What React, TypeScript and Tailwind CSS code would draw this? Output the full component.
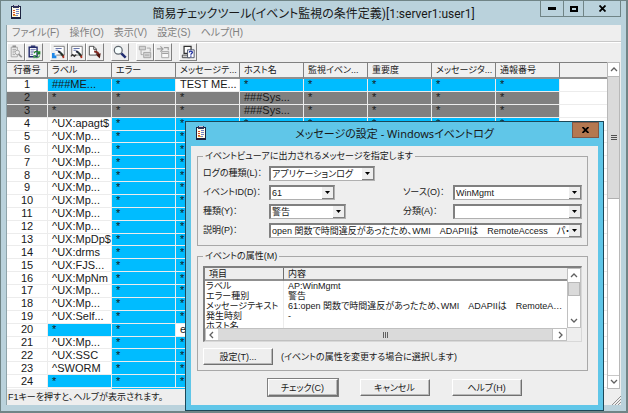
import type { ReactNode } from 'react';
import clsx from 'clsx';

const STAR = '*';

interface Row {
  label: string;
  message?: string;
  host?: string;
  disabled?: boolean;
}

const rows: Row[] = [
  { label: '###ME...', message: 'TEST ME...' },
  { label: STAR, host: '###Sys...', disabled: true },
  { label: STAR, host: '###Sys...', disabled: true },
  { label: '^UX:apagt$' },
  { label: '^UX:Mp...' },
  { label: '^UX:Mp...' },
  { label: '^UX:Mp...' },
  { label: '^UX:Mp...' },
  { label: '^UX:Mp...' },
  { label: '^UX:Mp...' },
  { label: '^UX:Mp...' },
  { label: '^UX:Mp...' },
  { label: '^UX:MpDp$' },
  { label: '^UX:drms' },
  { label: '^UX:FJS...' },
  { label: '^UX:MpNm' },
  { label: '^UX:Mp...' },
  { label: '^UX:Mp...' },
  { label: '^UX:Self...' },
  { label: STAR, message: 'e...' },
  { label: '^UX:Mp...' },
  { label: '^UX:SSC' },
  { label: '^SWORM' },
  { label: STAR },
];

const columns = ['ラベル', 'エラー', 'メッセージテ...', 'ホスト名', '監視イベン...', '重要度', 'メッセージタ...', '通報番号'];

const menus = ['ファイル(F)', '操作(O)', '表示(V)', '設定(S)', 'ヘルプ(H)'];

const attributes = [
  ['ラベル', 'AP:WinMgmt'],
  ['エラー種別', '警告'],
  ['メッセージテキスト', '61:open 関数で時間違反があったため、WMI\u2003ADAPIIは\u2003RemoteAccess パ'],
  ['発生時刻', '-'],
  ['ホスト名', ''],
];

function ClipboardIcon() {
  return (
    <svg className="block h-3.5 w-3" viewBox="0 0 12 14" shapeRendering="crispEdges" aria-hidden="true">
      <rect x="1" y="1" width="10" height="13" fill="#1c2340" />
      <rect x="2" y="2" width="8" height="10" fill="#fffbe8" />
      <rect x="3" y="0" width="6" height="3" fill="#30345c" />
      <rect x="4" y="0" width="4" height="1" fill="#c9c9d8" />
      <path d="M3 5h2M3 7h2M3 9h2" stroke="#d8502a" transform="translate(0 .5)" />
      <path d="M6 4h3M6 6h3M6 8h3M6 10h2" stroke="#6f7fc8" transform="translate(0 .5)" />
      <rect x="3" y="10" width="3" height="1" fill="#e0a030" />
    </svg>
  );
}

function Arrow({ dir }: { dir: 'up' | 'down' | 'left' | 'right' }) {
  const paths = { up: 'M1 5l3-3 3 3', down: 'M1 2l3 3 3-3', left: 'M5 1L2 4l3 3', right: 'M3 1l3 3-3 3' };
  return (
    <svg className="size-2" viewBox="0 0 8 8" fill="none" stroke="#606060" strokeWidth="1.3" aria-hidden="true">
      <path d={paths[dir]} />
    </svg>
  );
}

function ToolButton({ label, disabled, children }: { label: string; disabled?: boolean; children: ReactNode }) {
  return (
    <button
      type="button"
      aria-label={label}
      disabled={disabled}
      className="flex h-[18px] w-[18px] items-center justify-center border border-t-white border-r-[#808080] border-b-[#808080] border-l-white bg-[#eeeeee]"
    >
      <svg className="size-3.5" viewBox="0 0 16 16" fill="none" aria-hidden="true">
        {children}
      </svg>
    </button>
  );
}

// brush shared by the "definition" buttons
function Brush() {
  return (
    <>
      <path d="M7 7l3 2" stroke="#20283a" strokeWidth="2.4" />
      <path d="M10 9l3 4" stroke="#203028" strokeWidth="2.6" />
      <path d="M13 12v3" stroke="#b03020" strokeWidth="2" />
    </>
  );
}

function Toolbar() {
  return (
    <div role="toolbar" className="flex h-5 border-t border-white">
      <ToolButton label="検索" disabled>
        <path d="M2.5 2.5h7v11h-7zM4 5h4M4 7h3M4 9h2M4 11h3" stroke="#a0a0a0" />
        <path d="M4 1.5h4" stroke="#909090" strokeWidth="2" />
        <circle cx="9.500" cy="8.500" r="2.500" fill="#eee" stroke="#a0a0a0" />
        <path d="M11 10.500l3.500 3.500" stroke="#909090" strokeWidth="2" />
      </ToolButton>
      <ToolButton label="更新">
        <path d="M2.5 2.5h9v11h-9z" fill="#fff" stroke="#20286a" strokeWidth="1.6" />
        <path d="M4.500 1.500h5" stroke="#303870" strokeWidth="2" />
        <path d="M4 5h6M4 7h4M4 9h3M4 11h3" stroke="#6068a8" />
        <path d="M8 9.500c1-3 5-3 6 0M14.500 7v3h-3" stroke="#208030" strokeWidth="1.5" />
        <path d="M14.500 12c-1 3-5 3-6 1M8 15v-3h3" stroke="#50a060" strokeWidth="1.4" />
      </ToolButton>
      <div className="w-[7px]" />
      <ToolButton label="追加">
        <path d="M2 1.500h12v10H5" fill="#fff" stroke="#707070" />
        <path d="M4 4h7M4 6h3" stroke="#5060a0" />
        <path d="M0 9v6h5v-3H3V9z" fill="#2088e8" />
        <Brush />
      </ToolButton>
      <ToolButton label="編集">
        <path d="M2 1.500h12v10H2z" fill="#fff" stroke="#707070" />
        <path d="M4 4h7M4 6h3" stroke="#5060a0" />
        <path d="M1 13l2-2 2 2 2-2" stroke="#303030" strokeWidth="1.6" />
        <Brush />
      </ToolButton>
      <ToolButton label="削除">
        <path d="M1.500 1.500h5l3 3v7h-8z" fill="#fff" stroke="#404040" />
        <path d="M6.500 1.500V5h3" stroke="#404040" />
        <path d="M7 7.500c4 0 5 2 5 5" stroke="#802820" strokeWidth="2.400" />
        <path d="M9 11l4.500 4.500 1-6z" fill="#501810" />
      </ToolButton>
      <div className="w-[7px]" />
      <ToolButton label="参照">
        <circle cx="6" cy="6" r="4.500" fill="#f8ffff" stroke="#606870" strokeWidth="1.400" />
        <path d="M9.500 9.500l5 5" stroke="#202c70" strokeWidth="2.800" />
      </ToolButton>
      <div className="w-[7px]" />
      <ToolButton label="上へ移動" disabled>
        <path d="M1.500 1.500h7v4h-7zM6.500 8.500h8v6h-8z" fill="#d4d4d4" stroke="#a0a0a0" />
        <path d="M10 3.500h4v4M3.500 6v5h2M8 11.500h5" stroke="#a0a0a0" />
      </ToolButton>
      <ToolButton label="下へ移動" disabled>
        <path d="M6.500 7.500h8v7h-8z" fill="#f8f8f8" stroke="#a0a0a0" />
        <path d="M1 4.500h6M5 1.500l3 3-3 3M9 3h5v3M7 9.500h7" stroke="#a0a0a0" strokeWidth="1.300" />
      </ToolButton>
      <div className="w-[7px]" />
      <ToolButton label="ヘルプ">
        <path d="M3.500 1.500h8v8h-8z" fill="#fff" stroke="#303030" strokeWidth="1.400" />
        <path d="M1.500 11.500h9v3h-9z" fill="#d0d0d0" stroke="#404040" />
        <path d="M7.500 5.500h7.500v9H7.500z" fill="#fff" stroke="#404860" />
        <path d="M9.500 8.500c0-2 3.500-2 3.500 0 0 1-1.700 1-1.700 2.500M11.300 12v1.500" stroke="#1c2ca0" strokeWidth="1.500" />
      </ToolButton>
    </div>
  );
}

function ConditionTable() {
  return (
    <table className="h-[328px] w-full table-fixed border-separate border-spacing-0 bg-white text-[11px] leading-[11px]">
      <colgroup>
        <col className="w-[41px]" />
        {columns.map((c) => (
          <col key={c} className="w-16" />
        ))}
        <col />
      </colgroup>
      <thead className="text-[9px]">
        <tr className="h-[17px]">
          {['行番号', ...columns, ''].map((c, i) => (
            <th
              key={i}
              className={clsx(
                'h-[17px] border-t border-b-2 border-t-[#808080] border-b-[#909090] bg-[#f0f0f0] p-0 font-normal whitespace-nowrap',
                i === 0 ? 'text-center' : 'pl-1 text-left',
                i < 9 && 'border-r border-r-[#808080]',
              )}
            >
              {c}
            </th>
          ))}
        </tr>
      </thead>
      <tbody>
        {rows.map((row, i) => {
          const cells = [row.label, STAR, row.message ?? STAR, row.host ?? STAR, STAR, STAR, STAR, STAR];
          return (
            <tr key={i}>
              <td
                className={clsx(
                  'border-r border-b border-[#ececec] p-0 text-center',
                  row.disabled && 'bg-[#808080]',
                )}
              >
                {i + 1}
              </td>
              {cells.map((text, c) => (
                <td
                  key={c}
                  className={clsx(
                    'border-r border-b border-[#ececec] p-0 pl-1 whitespace-nowrap',
                    row.disabled && 'bg-[#808080]',
                    !row.disabled && (text === STAR || text.startsWith('#')) && 'bg-[#00bcff]',
                  )}
                >
                  {text}
                </td>
              ))}
              <td className="border-b border-[#ececec] p-0" />
            </tr>
          );
        })}
        <tr>
          <td className="h-[2px] border-r border-[#ececec] p-0" />
          <td className="h-[2px] border-r border-[#ececec] p-0" />
          <td colSpan={7} className="h-[2px] bg-[#00bcff] p-0" />
          <td className="h-[2px] p-0" />
        </tr>
      </tbody>
    </table>
  );
}

function GroupBox({ title, className, children }: { title: string; className?: string; children: ReactNode }) {
  return (
    <fieldset className={clsx('min-w-0 border border-[#a8a8a8] px-[5px]', className)}>
      <legend className="px-0.5 leading-[14px]">{title}</legend>
      {children}
    </fieldset>
  );
}

function Combo({ id, value, className }: { id: string; value: string; className?: string }) {
  return (
    <div className={clsx('grid h-[15px] border border-t-2 border-l-2 border-[#b0b0b0] border-t-[#808080] border-l-[#808080] bg-white', className)}>
      <select id={id} defaultValue={value} className="col-start-1 row-start-1 min-w-0 appearance-none bg-white pr-3 pl-px leading-3 outline-none">
        <option>{value}</option>
      </select>
      <span className="pointer-events-none col-start-1 row-start-1 flex w-3 items-center justify-center justify-self-end border-r border-b border-[#808080] bg-[#eeeeee]">
        <svg className="h-[3px] w-[5px]" viewBox="0 0 5 3" aria-hidden="true">
          <path d="M0 0h5L2.500 3z" fill="#000" />
        </svg>
      </span>
    </div>
  );
}

function PushButton({ className, children }: { className?: string; children: ReactNode }) {
  return (
    <button
      type="button"
      className={clsx(
        'h-[17px] w-[70px] border border-t-white border-r-[#707070] border-b-[#707070] border-l-white bg-[#eeeeee] leading-3 shadow-[inset_-1px_-1px_0_#b8b8b8]',
        className,
      )}
    >
      {children}
    </button>
  );
}

function AttributeList() {
  return (
    <div className="flex h-[76px] border border-t-2 border-l-2 border-[#d8d8d8] border-t-[#808080] border-l-[#808080] bg-[#eeeeee]">
      <div className="flex min-w-0 flex-1 flex-col">
        <div className="min-h-0 flex-1 overflow-hidden bg-white">
          <table className="w-full table-fixed border-separate border-spacing-0 leading-[10px]">
            <colgroup>
              <col className="w-[79px]" />
              <col />
            </colgroup>
            <thead>
              <tr>
                <th className="h-[13px] border-r border-b-2 border-r-[#707070] border-b-[#909090] bg-[#eeeeee] p-0 pl-1 text-left font-normal">項目</th>
                <th className="h-[13px] border-b-2 border-b-[#909090] bg-[#eeeeee] p-0 pl-1 text-left font-normal">内容</th>
              </tr>
            </thead>
            <tbody>
              {attributes.map(([name, value]) => (
                <tr key={name}>
                  <td className="h-[10px] border-r border-[#ececec] p-0 pl-px whitespace-nowrap">{name}</td>
                  <td className="h-[10px] truncate p-0 pr-1 pl-1">{value}</td>
                </tr>
              ))}
            </tbody>
          </table>
        </div>
        <div className="flex h-[13px] border border-[#c0c0c0] bg-[#dadada]">
          <span className="flex w-3 items-center justify-center bg-white">
            <Arrow dir="left" />
          </span>
          <span className="flex flex-1 items-center justify-center gap-px">
            <i className="h-1.5 w-px bg-[#606060]" />
            <i className="h-1.5 w-px bg-[#606060]" />
            <i className="h-1.5 w-px bg-[#606060]" />
          </span>
          <span className="flex w-3.5 items-center justify-center border-l border-[#c0c0c0] bg-white">
            <Arrow dir="right" />
          </span>
        </div>
      </div>
      <div className="mb-[13px] flex w-3.5 flex-col border border-[#c0c0c0] bg-white">
        <span className="flex h-[13px] items-center justify-center">
          <Arrow dir="up" />
        </span>
        <span className="h-3.5 border border-[#b8b8b8] bg-[#dadada]" />
        <span className="flex-1" />
        <span className="flex h-[13px] items-center justify-center">
          <Arrow dir="down" />
        </span>
      </div>
    </div>
  );
}

function MessageDialog() {
  return (
    <section
      role="dialog"
      aria-labelledby="dialog-title"
      className="absolute top-[120px] right-[22px] left-[184px] border border-[#1c4858] bg-[#60c6e8] px-[5px] pb-[5px]"
    >
      <header className="relative flex h-6 items-center justify-center">
        <span className="absolute top-1 left-1">
          <ClipboardIcon />
        </span>
        <h2 id="dialog-title" className="font-['Noto_Sans','Noto_Sans_CJK_JP',sans-serif] text-[11px] leading-4">
          メッセージの設定 - Windowsイベントログ
        </h2>
        <button type="button" aria-label="閉じる" className="absolute top-0 -right-px flex h-4 w-[27px] items-center justify-center border border-[#805848] bg-[#b47850]">
          <svg className="h-1.5 w-[7px]" viewBox="0 0 7 6" stroke="#000" strokeWidth="1.800" aria-hidden="true">
            <path d="M.5 0l6 6M6.500 0l-6 6" />
          </svg>
        </button>
      </header>
      <form className="bg-[#eeeeee] pt-[3px] pr-[10px] pb-[9px] pl-[6px] text-[9px] whitespace-nowrap" onSubmit={(e) => e.preventDefault()}>
        <GroupBox title="イベントビューアに出力されるメッセージを指定します" className="pt-[3px] pb-[7px]">
          <div className="grid grid-cols-[66px_1fr_50px_129px] items-center gap-y-1 leading-[15px]">
            <label htmlFor="log">ログの種類(L)：</label>
            <Combo id="log" value="アプリケーションログ" className="col-span-3 w-[106px]" />
            <label htmlFor="event">イベントID(D)：</label>
            <Combo id="event" value="61" className="w-[66px]" />
            <label htmlFor="source">ソース(O)：</label>
            <Combo id="source" value="WinMgmt" />
            <label htmlFor="kind">種類(Y)：</label>
            <Combo id="kind" value="警告" className="w-[77px]" />
            <label htmlFor="category">分類(A)：</label>
            <Combo id="category" value="" />
            <label htmlFor="description">説明(P)：</label>
            <Combo id="description" value={'open 関数で時間違反があったため、WMI\u2003ADAPIIは\u2003RemoteAccess\u2003パ・'} className="col-span-3" />
          </div>
        </GroupBox>
        <GroupBox title="イベントの属性(M)" className="mt-[3px] pt-[3px] pb-[5px]">
          <AttributeList />
          <div className="mt-1.5 flex items-center gap-2">
            <PushButton>設定(T)...</PushButton>
            <span className="leading-3">(イベントの属性を変更する場合に選択します)</span>
          </div>
        </GroupBox>
        <div className="mt-2 flex justify-center gap-[22px] pl-1">
          <PushButton className="outline outline-[#808080]">チェック(C)</PushButton>
          <PushButton>キャンセル</PushButton>
          <PushButton>ヘルプ(H)</PushButton>
        </div>
      </form>
    </section>
  );
}

export default function App() {
  return (
    <div className="relative flex h-screen flex-col overflow-hidden border-t border-r-2 border-b-2 border-l border-[#708486] bg-[#bad2dc] px-[5px] pb-[6px] font-['Liberation_Sans','Noto_Sans_CJK_JP',sans-serif] text-[#181818] [font-feature-settings:'palt']">
      <header className="relative flex h-6 items-center justify-center">
        <span className="absolute top-1 left-1">
          <ClipboardIcon />
        </span>
        <h1 className="pt-0.5 font-['Roboto','Noto_Sans_CJK_JP',sans-serif] text-[12px] leading-4">
          簡易チェックツール(イベント監視の条件定義)[1:server1:user1]
        </h1>
        <div className="absolute top-0 right-0 flex h-4 border border-t-0 border-[#708486]">
          <button type="button" aria-label="最小化" className="flex w-[22px] items-center justify-center">
            <span className="h-[3px] w-2 bg-black" />
          </button>
          <button type="button" aria-label="最大化" className="flex w-[21px] items-center justify-center border-x border-[#708486]">
            <span className="h-1.5 w-2 border-2 border-black" />
          </button>
          <button type="button" aria-label="閉じる" className="flex w-9 items-center justify-center">
            <svg className="h-[7px] w-[7px]" viewBox="0 0 7 7" stroke="#000" strokeWidth="1.800" aria-hidden="true">
              <path d="M.5 .5l6 6M6.500 .5l-6 6" />
            </svg>
          </button>
        </div>
      </header>

      <main className="flex min-h-0 flex-1 flex-col border-l border-[#8fa4aa] bg-[#eeeeee]">
        <nav className="flex h-[17px] items-center gap-[10px] border-b border-[#c8c8c8] pl-[5px] text-[10px] leading-4 text-[#808080]">
          {menus.map((m) => (
            <button key={m} type="button">
              {m}
            </button>
          ))}
        </nav>
        <Toolbar />
        <div className="flex min-h-0 flex-1 pr-px">
          <div className="min-w-0 flex-1 overflow-hidden">
            <ConditionTable />
          </div>
          <div className="flex w-[13px] flex-col border border-[#b8b8b8] bg-white">
            <span className="flex h-3.5 items-center justify-center border-b border-[#b8b8b8]">
              <Arrow dir="up" />
            </span>
            <span className="flex h-[122px] flex-col items-center justify-center gap-px border-b border-[#b0b0b0] bg-[#dadada]">
              <i className="h-px w-1.5 bg-[#505050]" />
              <i className="h-px w-1.5 bg-[#505050]" />
              <i className="h-px w-1.5 bg-[#505050]" />
            </span>
            <span className="flex-1" />
            <span className="flex h-[13px] items-center justify-center border-t border-[#c8c8c8]">
              <Arrow dir="down" />
            </span>
          </div>
        </div>
        <footer className="flex h-4 items-center justify-between pl-px text-[9px] leading-4">
          <span>F1キーを押すと、ヘルプが表示されます。</span>
          <svg className="size-2.5 self-end" viewBox="0 0 10 10" stroke="#909090" aria-hidden="true">
            <path d="M1 10l9-9M4 10l6-6M7 10l3-3" />
          </svg>
        </footer>
      </main>

      <MessageDialog />
    </div>
  );
}
